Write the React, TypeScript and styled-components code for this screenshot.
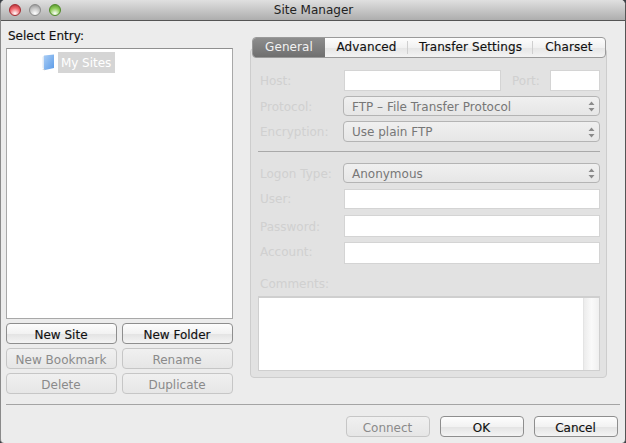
import React from "react";
import styled, { createGlobalStyle } from "styled-components";

const Global = createGlobalStyle`
  html, body { margin: 0; padding: 0; background: #3a3f45; }
  body { width: 626px; height: 443px; overflow: hidden; }
  * { box-sizing: border-box; }
`;

const Win = styled.div`
  width: 626px; height: 443px; background: #ececec; display: flex; flex-direction: column;
  font-family: "DejaVu Sans", sans-serif; font-size: 12px; color: #111;
  border-radius: 5px 5px 4px 4px; overflow: hidden;
  border-left: 1px solid #8a8a8a; border-right: 1px solid #555;
`;
const TitleBar = styled.div`
  height: 21px; flex: none; display: grid; grid-template-columns: 1fr auto 1fr; align-items: center;
  background: linear-gradient(#e0e0e0, #aeaeae); border-bottom: 1px solid #555; padding: 0 7px 0 8px;
`;
const Lights = styled.div`display: flex; gap: 8px;`;
const Light = styled.span<{ $c: string; $d: string }>`
  width: 12px; height: 12px; border-radius: 50%;
  border: 1px solid ${p => p.$d};
  background: radial-gradient(circle at 50% 85%, #fff 0, ${p => p.$c} 55%, ${p => p.$d} 100%);
`;
const Title = styled.div`font-size: 12px; color: #222; margin-top: -1px;`;

const Body = styled.div`
  flex: 1; display: grid; grid-template-columns: 227px 357px; column-gap: 17px; padding: 0 0 0 5px; align-items: start;
`;
const Left = styled.div`display: flex; flex-direction: column;`;
const Heading = styled.div`
  height: 27px; padding: 8px 0 0 2px; line-height: 15px; color: #111; -webkit-text-stroke: 0.15px #111;
`;
const Tree = styled.div`
  height: 271px; background: #fff; border: 1px solid #a8a8a8; border-top-color: #8f8f8f; padding: 3px 0 0 35px;
  display: flex; align-items: flex-start; gap: 3px;
`;
const Sel = styled.span`
  background: #d5d5d5; color: #fff; height: 21px; padding: 0 3px; line-height: 23px; width: 57px; white-space: nowrap;
  overflow: hidden; letter-spacing: -0.05px;
`;
const ButtonGrid = styled.div`
  margin-top: 4px; display: grid; grid-template-columns: 111px 111px; column-gap: 5px; row-gap: 4px;
`;
const Btn = styled.button<{ $w?: number; $off?: boolean }>`
  width: ${p => (p.$w ? `${p.$w}px` : "100%")}; height: 21px; border-radius: 4px; padding: 2px 1px 0 0;
  font: inherit; line-height: 18px;
  color: ${p => (p.$off ? "#8a8a8a" : "#111")};
  -webkit-text-stroke: ${p => (p.$off ? "0" : "0.15px #111")};
  border: 1px solid ${p => (p.$off ? "#c6c6c6" : "#8e8e8e")};
  background: ${p => (p.$off ? "linear-gradient(#f0f0f0, #e6e6e6)" : "linear-gradient(#fdfdfd, #f2f2f2 50%, #e4e4e4 55%, #f4f4f4)")};
`;

const Right = styled.div`position: relative; margin-top: 27px;`;
const Tabs = styled.div`
  position: absolute; left: 2px; top: -11px; width: 354px; height: 21px; display: flex; z-index: 1;
  border: 1px solid #9a9a9a; border-radius: 4px; background: linear-gradient(#fdfdfd, #f1f1f1 50%, #e6e6e6 55%, #f3f3f3);
  overflow: hidden;
`;
const Tab = styled.div<{ $w: number; $on?: boolean; $sep?: boolean }>`
  width: ${p => p.$w}px; text-align: center; line-height: 19px; white-space: nowrap; flex: none;
  letter-spacing: 0.1px;
  color: ${p => (p.$on ? "#f2f2f2" : "#111")};
  -webkit-text-stroke: ${p => (p.$on ? "0" : "0.15px #111")};
  background: ${p => (p.$on ? "linear-gradient(#8d8d8d, #6f6f6f)" : "transparent")};
  position: relative;
  &::after {
    content: "";
    display: ${p => (p.$sep ? "block" : "none")};
    position: absolute; right: 0; top: 3px; bottom: 3px; width: 1px; background: #cfcfcf;
  }
`;
const Panel = styled.div`
  height: 330px; background: #e2e2e2; border: 1px solid #cdcdcd; border-radius: 4px;
  padding: 21px 6px 6px 7px; display: flex; flex-direction: column;
`;
const Row = styled.div<{ $mt?: number; $h?: number }>`
  display: flex; align-items: center; height: ${p => p.$h ?? 22}px; margin-top: ${p => p.$mt ?? 0}px;
`;
const Label = styled.span<{ $w?: number; $pl?: number; $shift?: number }>`
  width: ${p => p.$w ?? 85}px; color: #d0d0d0; flex: none; font-weight: 400; white-space: nowrap;
  padding-left: ${p => p.$pl ?? 2}px;
  padding-top: ${p => Math.max(p.$shift ?? 0, 0) * 2}px;
  padding-bottom: ${p => Math.max(-(p.$shift ?? 0), 0) * 2}px;
`;
const Field = styled.div<{ $w?: number }>`
  width: ${p => (p.$w ? `${p.$w}px` : "auto")}; flex: ${p => (p.$w ? "none" : 1)}; height: 100%;
  background: #fff; border: 1px solid #d4d4d4;
`;
const Select = styled.div`
  flex: 1; margin-left: -1px; height: 100%; border-radius: 4px; border: 1px solid #b4b4b4;
  background: linear-gradient(#f0f0f0, #e6e6e6); color: #777; padding: 1px 4px 0 8px;
  display: flex; align-items: center; justify-content: space-between; line-height: 18px;
`;
const Rule = styled.div`height: 1px; background: #a9a9a9; margin: 9px 0 11px;`;
const TextArea = styled.div`
  height: 75px; margin-top: 4px; background: #fff; border: 1px solid #cfcfcf; border-width: 2px 1px 1px 1px;
  display: flex; justify-content: flex-end;
`;
const Scroll = styled.div`
  width: 16px; background: linear-gradient(90deg, #ececec, #fafafa 50%, #f0f0f0); border-left: 1px solid #e4e4e4;
`;
const CommentsLabel = styled(Label)`display: block; line-height: 15px; margin-top: 13px; height: 15px;`;

const Footer = styled.div`
  flex: none; height: 39px; margin-left: 5px; border-top: 1px solid #a4a4a4; margin-right: 5px;
  display: flex; justify-content: flex-end; gap: 10px; padding: 11px 2px 0 0;
`;

const Updown = () => (
  <svg width="7" height="11" viewBox="0 0 7 11">
    <path d="M3.5 0.5 L6.5 4 H0.5 Z M3.5 10.5 L6.5 7 H0.5 Z" fill="#8b8b8b" />
  </svg>
);
const Folder = () => (
  <svg width="13" height="17" viewBox="0 0 13 17" style={{ marginTop: 2, flex: "none" }}>
    <defs>
      <linearGradient id="fg" x1="0" x2="1" y1="0" y2="1">
        <stop offset="0" stopColor="#a9cdf5" />
        <stop offset="1" stopColor="#5b9be8" />
      </linearGradient>
    </defs>
    <path d="M0 15 L3 16.5 L3 15 Z" fill="#d0d0d0" />
    <path d="M2 1.5 L12 0.5 V14 L3 16 L2 15 Z" fill="url(#fg)" />
    <path d="M0.5 3 L2 1.5 V15 L0.5 14 Z" fill="#dfe9f5" />
  </svg>
);

export default function App() {
  return (
    <>
      <Global />
      <Win>
        <TitleBar>
          <Lights>
            <Light $c="#f0646a" $d="#a52a30" />
            <Light $c="#c4c4c4" $d="#8a8a8a" />
            <Light $c="#8ccb55" $d="#4f8a28" />
          </Lights>
          <Title>Site Manager</Title>
          <span />
        </TitleBar>
        <Body>
          <Left>
            <Heading>Select Entry:</Heading>
            <Tree>
              <Folder />
              <Sel>My Sites</Sel>
            </Tree>
            <ButtonGrid>
              <Btn>New Site</Btn>
              <Btn>New Folder</Btn>
              <Btn $off>New Bookmark</Btn>
              <Btn $off>Rename</Btn>
              <Btn $off>Delete</Btn>
              <Btn $off>Duplicate</Btn>
            </ButtonGrid>
          </Left>
          <Right>
            <Tabs>
              <Tab $w={72} $on>General</Tab>
              <Tab $w={83} $sep>Advanced</Tab>
              <Tab $w={125} $sep>Transfer Settings</Tab>
              <Tab $w={72}>Charset</Tab>
            </Tabs>
            <Panel>
              <Row $h={21}>
                <Label $w={86}>Host:</Label>
                <Field $w={157} />
                <Label $w={49} $pl={11}>Port:</Label>
                <Field />
              </Row>
              <Row $mt={5} $h={20}>
                <Label $w={86} $shift={1}>Protocol:</Label>
                <Select>FTP – File Transfer Protocol<Updown /></Select>
              </Row>
              <Row $mt={5} $h={21}>
                <Label $w={86}>Encryption:</Label>
                <Select>Use plain FTP<Updown /></Select>
              </Row>
              <Rule />
              <Row $h={20}>
                <Label $w={86} $shift={1}>Logon Type:</Label>
                <Select>Anonymous<Updown /></Select>
              </Row>
              <Row $mt={6} $h={20}>
                <Label $w={86}>User:</Label>
                <Field />
              </Row>
              <Row $mt={6} $h={22}>
                <Label $w={86} $shift={1}>Password:</Label>
                <Field />
              </Row>
              <Row $mt={5} $h={22}>
                <Label $w={86} $shift={-1}>Account:</Label>
                <Field />
              </Row>
              <CommentsLabel>Comments:</CommentsLabel>
              <TextArea><Scroll /></TextArea>
            </Panel>
          </Right>
        </Body>
        <Footer>
          <Btn $w={84} $off>Connect</Btn>
          <Btn $w={84}>OK</Btn>
          <Btn $w={84}>Cancel</Btn>
        </Footer>
      </Win>
    </>
  );
}
